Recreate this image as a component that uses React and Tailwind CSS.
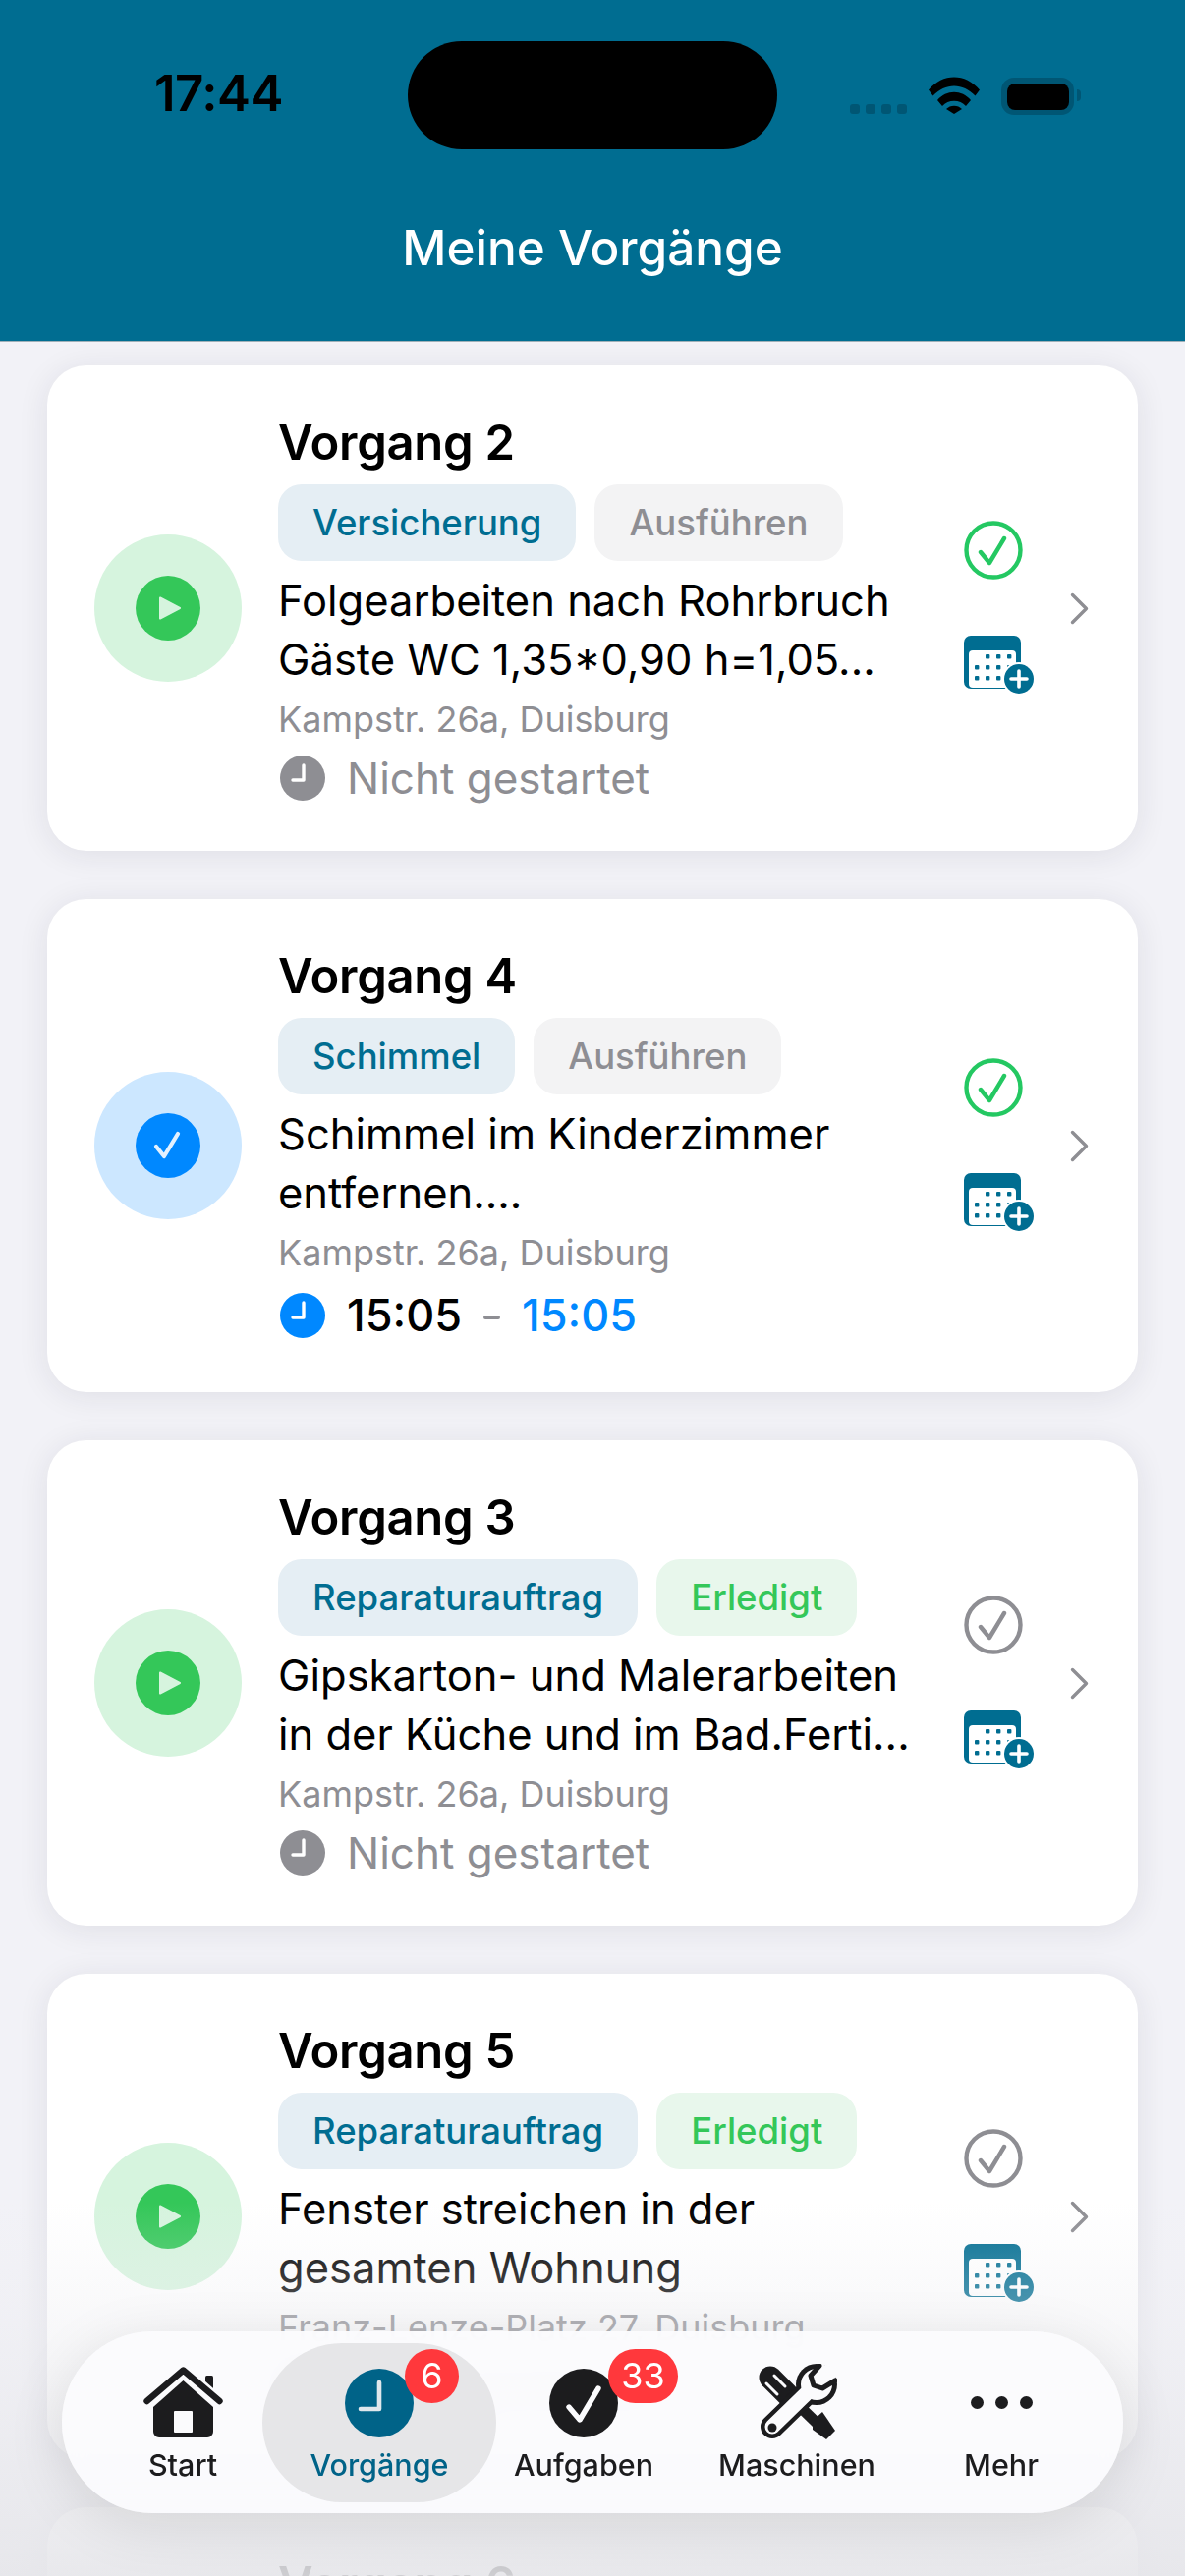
import React from "react";

const cards = [
  {
    title: "Vorgang 2",
    tag: "Versicherung",
    badge: "Ausführen",
    lines: ["Folgearbeiten nach Rohrbruch", "Gäste WC 1,35*0,90 h=1,05..."],
    address: "Kampstr. 26a, Duisburg",
  },
  {
    title: "Vorgang 4",
    tag: "Schimmel",
    badge: "Ausführen",
    lines: ["Schimmel im Kinderzimmer", "entfernen...."],
    address: "Kampstr. 26a, Duisburg",
    running: true,
  },
  {
    title: "Vorgang 3",
    tag: "Reparaturauftrag",
    badge: "Erledigt",
    lines: ["Gipskarton- und Malerarbeiten", "in der Küche und im Bad.Ferti..."],
    address: "Kampstr. 26a, Duisburg",
  },
  {
    title: "Vorgang 5",
    tag: "Reparaturauftrag",
    badge: "Erledigt",
    lines: ["Fenster streichen in der", "gesamten Wohnung"],
    address: "Franz-Lenze-Platz 27, Duisburg",
  },
  {
    title: "Vorgang 6",
    tag: "Reparaturauftrag",
    badge: "Erledigt",
    lines: ["Fenster streichen in der", "gesamten Wohnung"],
    address: "Franz-Lenze-Platz 27, Duisburg",
  },
];

// Small filled clock used in the status row and the tab bar
const ClockDot = ({ className = "", hand = "#fff" }) => (
  <svg viewBox="0 0 46 46" className={className}>
    <circle cx="23" cy="23" r="23" fill="currentColor" />
    <path d="M24 10v15H13" fill="none" stroke={hand} strokeWidth="3.4" strokeLinecap="round" strokeLinejoin="round" />
  </svg>
);

const CheckCircle = ({ done }) => (
  <svg viewBox="0 0 60 60" className={`w-[60px] h-[60px] ${done ? "text-[#8e8e93]" : "text-[#24c862]"}`}>
    <circle cx="30" cy="30" r="27.5" fill="none" stroke="currentColor" strokeWidth="4.4" />
    <path d="M17 32l9 11 15-25" fill="none" stroke="currentColor" strokeWidth="4.4" strokeLinecap="round" strokeLinejoin="round" />
  </svg>
);

const CalendarPlus = () => (
  <svg viewBox="0 0 71 59" className="w-[71px] h-[59px]">
    <rect width="58" height="54" rx="7" fill="#006d91" />
    <path d="M5 19a4 4 0 0 1 4-4h40a4 4 0 0 1 4 4v30a4 4 0 0 1-4 4H9a4 4 0 0 1-4-4z" fill="#fff" />
    {[[24, 21], [35, 21], [46, 21], [13, 32], [24, 32], [35, 32], [46, 32], [13, 43], [24, 43], [35, 43]].map(([x, y]) => (
      <rect key={`${x}-${y}`} x={x - 2} y={y - 2} width="4.4" height="4.4" rx="1" fill="#006d91" />
    ))}
    <circle cx="56" cy="44" r="17" fill="#fff" />
    <circle cx="56" cy="44" r="15" fill="#006d91" />
    <path d="M56 36v16M48 44h16" stroke="#fff" strokeWidth="3.6" strokeLinecap="round" />
  </svg>
);

const Card = ({ card }) => {
  const done = card.badge === "Erledigt";
  return (
    <div className="flex items-center shrink-0 bg-white rounded-[40px] pl-[48px] py-[51px] shadow-[0_4px_32px_rgba(30,30,60,0.09)]">
      {card.running ? (
        <div className="w-[150px] h-[150px] rounded-full bg-[#cce7ff] flex items-center justify-center shrink-0">
          <div className="w-[66px] h-[66px] rounded-full bg-[#0088ff] flex items-center justify-center">
            <svg viewBox="0 0 34 34" className="w-[34px] h-[34px]">
              <path d="M5 18l8 10L27 5" fill="none" stroke="#e3f1ff" strokeWidth="4.2" strokeLinecap="round" strokeLinejoin="round" />
            </svg>
          </div>
        </div>
      ) : (
        <div className="w-[150px] h-[150px] rounded-full bg-[#d6f4de] flex items-center justify-center shrink-0">
          <div className="w-[66px] h-[66px] rounded-full bg-[#34c759] flex items-center justify-center">
            <svg viewBox="0 0 26 26" className="w-[26px] h-[26px] ml-[3px]">
              <path d="M3 2.5L23 13 3 23.5z" fill="#d6f4de" stroke="#d6f4de" strokeWidth="2" strokeLinejoin="round" />
            </svg>
          </div>
        </div>
      )}

      <div className="ml-[37px] w-[661px] shrink-0">
        <div className="h-[56px] leading-[56px] text-[49px] font-semibold text-black tracking-[-0.3px]">{card.title}</div>
        <div className="flex gap-[19px] mt-[14px]">
          <span className="h-[78px] leading-[78px] px-[35px] rounded-[24px] bg-[#e5eef4] text-[#006d91] text-[36.5px] font-medium">
            {card.tag}
          </span>
          <span
            className={`h-[78px] leading-[78px] px-[35px] rounded-[24px] text-[36.5px] font-medium ${
              done ? "bg-[#e8f7ec] text-[#34c759]" : "bg-[#f3f3f4] text-[#8e8e93]"
            }`}
          >
            {card.badge}
          </span>
        </div>
        <div className="mt-[10px] text-[43.5px] leading-[60px] text-black whitespace-nowrap">
          {card.lines.map((line) => (
            <div key={line}>{line}</div>
          ))}
        </div>
        <div className="mt-[9px] h-[44px] leading-[44px] text-[36px] text-[#8e8e93]">{card.address}</div>
        {card.running ? (
          <div className="mt-[15px] h-[54px] flex items-center">
            <ClockDot className="w-[46px] h-[46px] ml-[2px] text-[#0088ff]" />
            <span className="ml-[22px] text-[45px] font-medium text-black">15:05</span>
            <span className="mx-[22px] w-[17px] h-[4px] bg-[#8e8e93] rounded-full mt-[3px]" />
            <span className="text-[45px] font-medium text-[#0088ff]">15:05</span>
          </div>
        ) : (
          <div className="mt-[15px] h-[46px] flex items-center">
            <ClockDot className="w-[46px] h-[46px] ml-[2px] text-[#8e8e93]" />
            <span className="ml-[22px] text-[44px] text-[#8e8e93]">Nicht gestartet</span>
          </div>
        )}
      </div>

      <div className="ml-[37px] mb-[3px] w-[71px] flex flex-col gap-[57px] shrink-0">
        <CheckCircle done={done} />
        <CalendarPlus />
      </div>

      <svg viewBox="0 0 19 33" className="ml-[37px] w-[19px] h-[33px] shrink-0">
        <path d="M2.5 2.5l14 14-14 14" fill="none" stroke="#8e8e93" strokeWidth="3.4" strokeLinecap="round" strokeLinejoin="round" />
      </svg>
    </div>
  );
};

const HomeIcon = () => (
  <svg viewBox="0 0 81 73" className="w-[81px] h-[73px]">
    <rect x="63" y="9" width="8" height="22" rx="1.5" fill="#1c1c1e" />
    <path d="M3 36L40.5 3 78 36" fill="none" stroke="#fbfbfd" strokeWidth="12" />
    <path d="M3.500 35L40.500 3.500 77.500 35" fill="none" stroke="#1c1c1e" strokeWidth="6.400" strokeLinecap="round" strokeLinejoin="round" />
    <path d="M10 41L40.500 14 71 41v25a6 6 0 0 1-6 6H16a6 6 0 0 1-6-6z" fill="#1c1c1e" />
    <rect x="31" y="45" width="19" height="22" rx="1" fill="#fbfbfd" />
  </svg>
);

const ToolsIcon = () => (
  <svg viewBox="0 0 81 79" className="w-[81px] h-[79px]">
    {/* screwdriver */}
    <path d="M13 14L30 31" stroke="#1c1c1e" strokeWidth="23" strokeLinecap="round" />
    <path d="M30 31L64 64" stroke="#1c1c1e" strokeWidth="11" />
    <path d="M57 57l10-9 13 19-9 9-14-10z" fill="#1c1c1e" transform="translate(-1 1)" />
    <path d="M9 20l11 11M17 12l11 11" stroke="#fbfbfd" strokeWidth="3" strokeLinecap="round" />
    {/* wrench */}
    <path d="M52 28L15 64" stroke="#1c1c1e" strokeWidth="24" strokeLinecap="round" />
    <circle cx="60" cy="21" r="21" fill="#1c1c1e" />
    <path d="M52 28L15 64" stroke="#fbfbfd" strokeWidth="15" strokeLinecap="round" />
    <circle cx="60" cy="21" r="16" fill="#fbfbfd" />
    <path d="M62 0l-9 13 3 9 9 3 14-9 4-12z" fill="#fbfbfd" />
    <path d="M63 2L54 12l3 10 9 3 13-8" fill="none" stroke="#1c1c1e" strokeWidth="5" strokeLinecap="round" strokeLinejoin="round" />
    <circle cx="15" cy="65" r="4.500" fill="#1c1c1e" />
  </svg>
);

const tabs = [
  { label: "Start", width: "w-[198px]", icon: <HomeIcon /> },
  {
    label: "Vorgänge",
    width: "w-[202px]",
    active: true,
    count: "6",
    icon: (
      <svg viewBox="0 0 70 70" className="w-[70px] h-[70px]">
        <circle cx="35" cy="35" r="35" fill="#006388" />
        <path d="M35 14v27H16" fill="none" stroke="#dfe7ec" strokeWidth="4.600" strokeLinecap="round" strokeLinejoin="round" />
      </svg>
    ),
  },
  {
    label: "Aufgaben",
    width: "w-[214px]",
    count: "33",
    icon: (
      <svg viewBox="0 0 70 70" className="w-[70px] h-[70px]">
        <circle cx="35" cy="35" r="35" fill="#1c1c1e" />
        <path d="M20 39l11 13L50 20" fill="none" stroke="#fbfbfd" strokeWidth="5.400" strokeLinecap="round" strokeLinejoin="round" />
      </svg>
    ),
  },
  { label: "Maschinen", width: "w-[220px]", icon: <ToolsIcon /> },
  {
    label: "Mehr",
    width: "w-[196px]",
    icon: (
      <div className="h-[73px] flex items-center gap-[12px]">
        <span className="w-[13px] h-[13px] rounded-full bg-[#1c1c1e]" />
        <span className="w-[13px] h-[13px] rounded-full bg-[#1c1c1e]" />
        <span className="w-[13px] h-[13px] rounded-full bg-[#1c1c1e]" />
      </div>
    ),
  },
];

const Tab = ({ tab }) => (
  <div className={`${tab.width} h-full relative flex flex-col items-center pt-[33px] shrink-0`}>
    {tab.active && <div className="absolute top-[12px] -left-[18px] w-[238px] h-[162px] rounded-[81px] bg-[#e3e3e6]/90" />}
    <div className="relative h-[79px] flex items-center justify-center">
      {tab.icon}
      {tab.count && (
        <span
          className={`absolute -top-[15px] h-[55px] rounded-full bg-[#ff383c] text-white text-[36px] leading-[55px] text-center ${
            tab.count.length > 1 ? "-right-[61px] w-[71px]" : "-right-[46px] w-[55px]"
          }`}
        >
          {tab.count}
        </span>
      )}
    </div>
    <span className={`relative mt-[4px] text-[30.5px] leading-[40px] font-medium ${tab.active ? "text-[#006388]" : "text-[#1c1c1e]"}`}>
      {tab.label}
    </span>
  </div>
);

export default function App() {
  return (
    <div className="relative w-[1206px] h-[2622px] overflow-hidden bg-[#f2f2f7] font-['Inter',sans-serif]">
      {/* Header with status bar */}
      <header className="relative h-[348px] bg-[#006d91] border-b border-[#9fb0b8]">
        <div className="h-[152px] pt-[42px] flex items-start">
          <div className="w-[415px] h-[110px] flex items-center pl-[157px] pb-[6px] text-[51px] leading-none font-semibold text-black tracking-[-0.5px]">
            17:44
          </div>
          <div className="w-[376px] h-[110px] rounded-[55px] bg-black" />
          <div className="h-[110px] flex items-end pb-[36px] pl-[74px]">
            <div className="flex gap-[6px]">
              <span className="w-[10px] h-[10px] rounded-[3px] bg-[#005674]" />
              <span className="w-[10px] h-[10px] rounded-[3px] bg-[#005674]" />
              <span className="w-[10px] h-[10px] rounded-[3px] bg-[#005674]" />
              <span className="w-[10px] h-[10px] rounded-[3px] bg-[#005674]" />
            </div>
            <svg viewBox="0 0 52 38" className="w-[52px] h-[38px] ml-[22px]">
              <path d="M0 13.500C14-4 38-4 52 13.500l-4.500 6C35 6 17 6 4.500 19.500z" fill="#000" />
              <path d="M9 24C18 13 34 13 43 24l-5 6c-6-7-18-7-24 0z" fill="#000" />
              <path d="M18 33c4-4.500 12-4.500 16 0l-8 5z" fill="#000" />
            </svg>
            <div className="ml-[22px] mb-[-1px] w-[74px] h-[38px] rounded-[13px] border-[6px] border-[#005674] flex items-center justify-center">
              <div className="w-[63px] h-[27px] rounded-[8px] bg-black shrink-0" />
            </div>
            <div className="ml-[3px] mb-[13px] w-[4px] h-[12px] rounded-r-full bg-[#005674]" />
          </div>
        </div>
        <h1 className="mt-[72px] text-center text-[49.5px] leading-[56px] font-medium text-white">Meine Vorgänge</h1>
      </header>

      {/* Job list */}
      <main className="flex flex-col gap-[49px] px-[48px] pt-[24px]">
        {cards.map((card) => (
          <Card key={card.title} card={card} />
        ))}
      </main>

      {/* Fade under the tab bar */}
      <div className="absolute left-0 right-0 bottom-0 h-[380px] bg-gradient-to-b from-[#ededf1]/0 from-0% via-[#ededf1]/35 via-30% to-[#e6e6ea]/90 to-100%" />

      {/* Floating tab bar */}
      <nav className="absolute left-[63px] top-[2373px] w-[1080px] h-[185px] rounded-[92px] bg-[#fbfbfd]/95 backdrop-blur-md shadow-[0_12px_60px_rgba(0,0,0,0.10)] flex pl-[24px]">
        {tabs.map((tab) => (
          <Tab key={tab.label} tab={tab} />
        ))}
      </nav>
    </div>
  );
}
